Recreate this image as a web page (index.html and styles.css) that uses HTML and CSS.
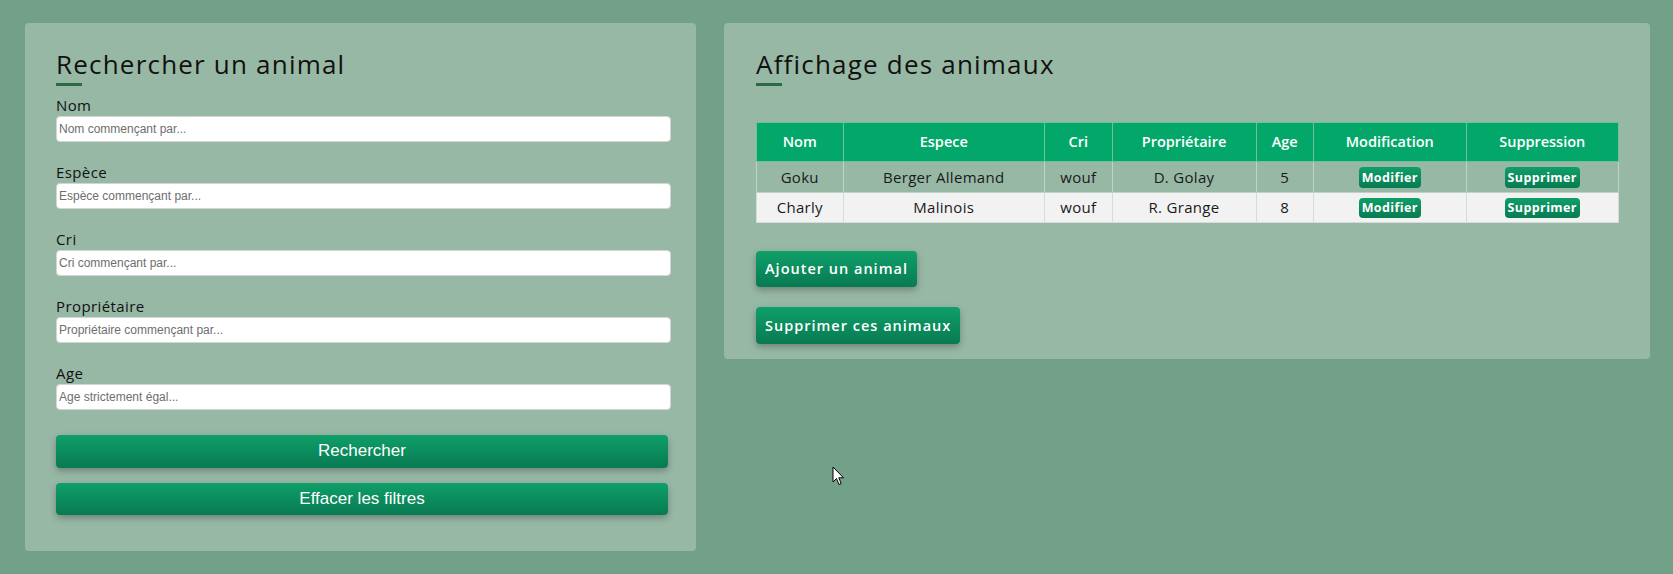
FILE: index.html
```html
<!DOCTYPE html>
<html lang="fr">
<head>
<meta charset="utf-8">
<title>Animaux</title>
<link rel="stylesheet" href="styles.css">
</head>
<body>
<div class="page">
  <section class="card card-search">
    <h2 class="title">Rechercher un animal</h2>
    <span class="title-bar"></span>
    <form class="search-form">
      <label class="field-label">Nom</label>
      <input class="field-input" type="text" placeholder="Nom commençant par...">
      <label class="field-label">Espèce</label>
      <input class="field-input" type="text" placeholder="Espèce commençant par...">
      <label class="field-label">Cri</label>
      <input class="field-input" type="text" placeholder="Cri commençant par...">
      <label class="field-label">Propriétaire</label>
      <input class="field-input" type="text" placeholder="Propriétaire commençant par...">
      <label class="field-label">Age</label>
      <input class="field-input" type="text" placeholder="Age strictement égal...">
      <button type="button" class="btn-wide btn-first">Rechercher</button>
      <button type="button" class="btn-wide">Effacer les filtres</button>
    </form>
  </section>

  <section class="card card-list">
    <h2 class="title">Affichage des animaux</h2>
    <span class="title-bar"></span>
    <table class="animals">
      <colgroup>
        <col class="c-nom"><col class="c-esp"><col class="c-cri"><col class="c-prop"><col class="c-age"><col class="c-mod"><col class="c-sup">
      </colgroup>
      <thead>
        <tr><th>Nom</th><th>Espece</th><th>Cri</th><th>Propriétaire</th><th>Age</th><th>Modification</th><th>Suppression</th></tr>
      </thead>
      <tbody>
        <tr class="row-a"><td>Goku</td><td>Berger Allemand</td><td>wouf</td><td>D. Golay</td><td>5</td><td><button type="button" class="btn-small">Modifier</button></td><td><button type="button" class="btn-small">Supprimer</button></td></tr>
        <tr class="row-b"><td>Charly</td><td>Malinois</td><td>wouf</td><td>R. Grange</td><td>8</td><td><button type="button" class="btn-small">Modifier</button></td><td><button type="button" class="btn-small">Supprimer</button></td></tr>
      </tbody>
    </table>
    <div class="actions">
      <button type="button" class="btn-action">Ajouter un animal</button>
      <button type="button" class="btn-action">Supprimer ces animaux</button>
    </div>
  </section>
</div>
<svg class="cursor" width="13" height="20" viewBox="0 0 13 20"><path d="M1 1 L1 16 L4.5 12.5 L7 18.5 L9.2 17.6 L6.8 11.8 L11.5 11.8 Z" fill="#fff" stroke="#000" stroke-width="1"/></svg>
</body>
</html>
```
FILE: styles.css
```css
* { box-sizing: border-box; }
html, body { margin: 0; padding: 0; }
body {
  background: #73a089;
  font-family: "Open Sans", "Noto Sans", sans-serif;
  color: #111;
  width: 1673px;
  height: 574px;
  overflow: hidden;
  position: relative;
}
.page {
  display: flex;
  align-items: flex-start;
  gap: 28px;
  padding: 23px 23px 0 25px;
}
.card {
  background: #98b8a6;
  border-radius: 4px;
  display: flex;
  flex-direction: column;
  align-items: flex-start;
}
.card-search {
  width: 673px;
  padding: 26px 25px 36px 31px;
}
.card-list {
  flex: 1;
  padding: 26px 31px 15px 32px;
}
.title {
  margin: 0;
  font-size: 26px;
  font-weight: 400;
  line-height: 30px;
  color: #111;
  letter-spacing: 1.2px;
}
.title-bar {
  display: block;
  width: 26px;
  height: 3px;
  margin-top: 4px;
  background: #2c6a45;
}
.search-form {
  display: flex;
  flex-direction: column;
  width: 100%;
}
.field-label {
  display: block;
  font-size: 15px;
  line-height: 22px;
  margin-top: 19px;
  color: #111;
  letter-spacing: 0.4px;
}
.field-label:first-child { margin-top: 8px; }
.field-input {
  width: 100%;
  height: 26px;
  border: 1px solid #d4d4d4;
  border-radius: 4px;
  background: #fff;
  padding: 0 2px;
  font-family: "Liberation Sans", Arial, sans-serif;
  font-size: 12px;
  color: #333;
}
.field-input::placeholder { color: #6e6e6e; }
.btn-wide {
  width: 612px;
  height: 32.5px;
  margin-top: 15px;
  border: none;
  border-radius: 4px;
  background: linear-gradient(180deg, #0f9f69 0%, #087a52 100%);
  color: #fff;
  font-family: "Liberation Sans", Arial, sans-serif;
  font-size: 17px;
  box-shadow: 0 3px 7px rgba(0, 0, 0, 0.28);
  padding: 0;
}
.btn-first { margin-top: 25px; }
.animals {
  margin-top: 35.5px;
  width: 862px;
  border-collapse: collapse;
  table-layout: fixed;
  text-align: center;
  font-size: 15px;
}
.c-nom { width: 86.5px; }
.c-esp { width: 201.5px; }
.c-cri { width: 67.5px; }
.c-prop { width: 144px; }
.c-age { width: 57.5px; }
.c-mod { width: 152.5px; }
.c-sup { width: 152.5px; }
.animals th {
  background: #03a76a;
  color: #fff;
  font-weight: 600;
  font-size: 14.5px;
  height: 39.5px;
  padding: 0;
  border: 1px solid #6cc29c;
}
.animals td {
  height: 30.5px;
  padding: 0;
  border: 1px solid #bfd2c6;
  color: #1a1a1a;
  letter-spacing: 0.3px;
}
.row-b td { background: #f2f2f2; border-color: #d6dcd8; height: 30px; }
.btn-small {
  border: none;
  border-radius: 4px;
  background: linear-gradient(180deg, #0f9f69 0%, #087a52 100%);
  color: #fff;
  font-family: "Open Sans", sans-serif;
  font-weight: 700;
  font-size: 12.5px;
  letter-spacing: 0.4px;
  height: 20.5px;
  line-height: 20px;
  padding: 0 3px;
  vertical-align: middle;
}
.actions {
  display: flex;
  flex-direction: column;
  align-items: flex-start;
  gap: 20px;
  margin-top: 28px;
}
.btn-action {
  height: 36.5px;
  border: none;
  border-radius: 4px;
  background: linear-gradient(180deg, #0f9f69 0%, #087a52 100%);
  color: #fff;
  font-family: "Open Sans", sans-serif;
  font-weight: 600;
  font-size: 14.5px;
  letter-spacing: 1px;
  padding: 0 9px;
  box-shadow: 0 3px 7px rgba(0, 0, 0, 0.28);
}
.cursor {
  position: absolute;
  left: 832px;
  top: 466px;
}
```
